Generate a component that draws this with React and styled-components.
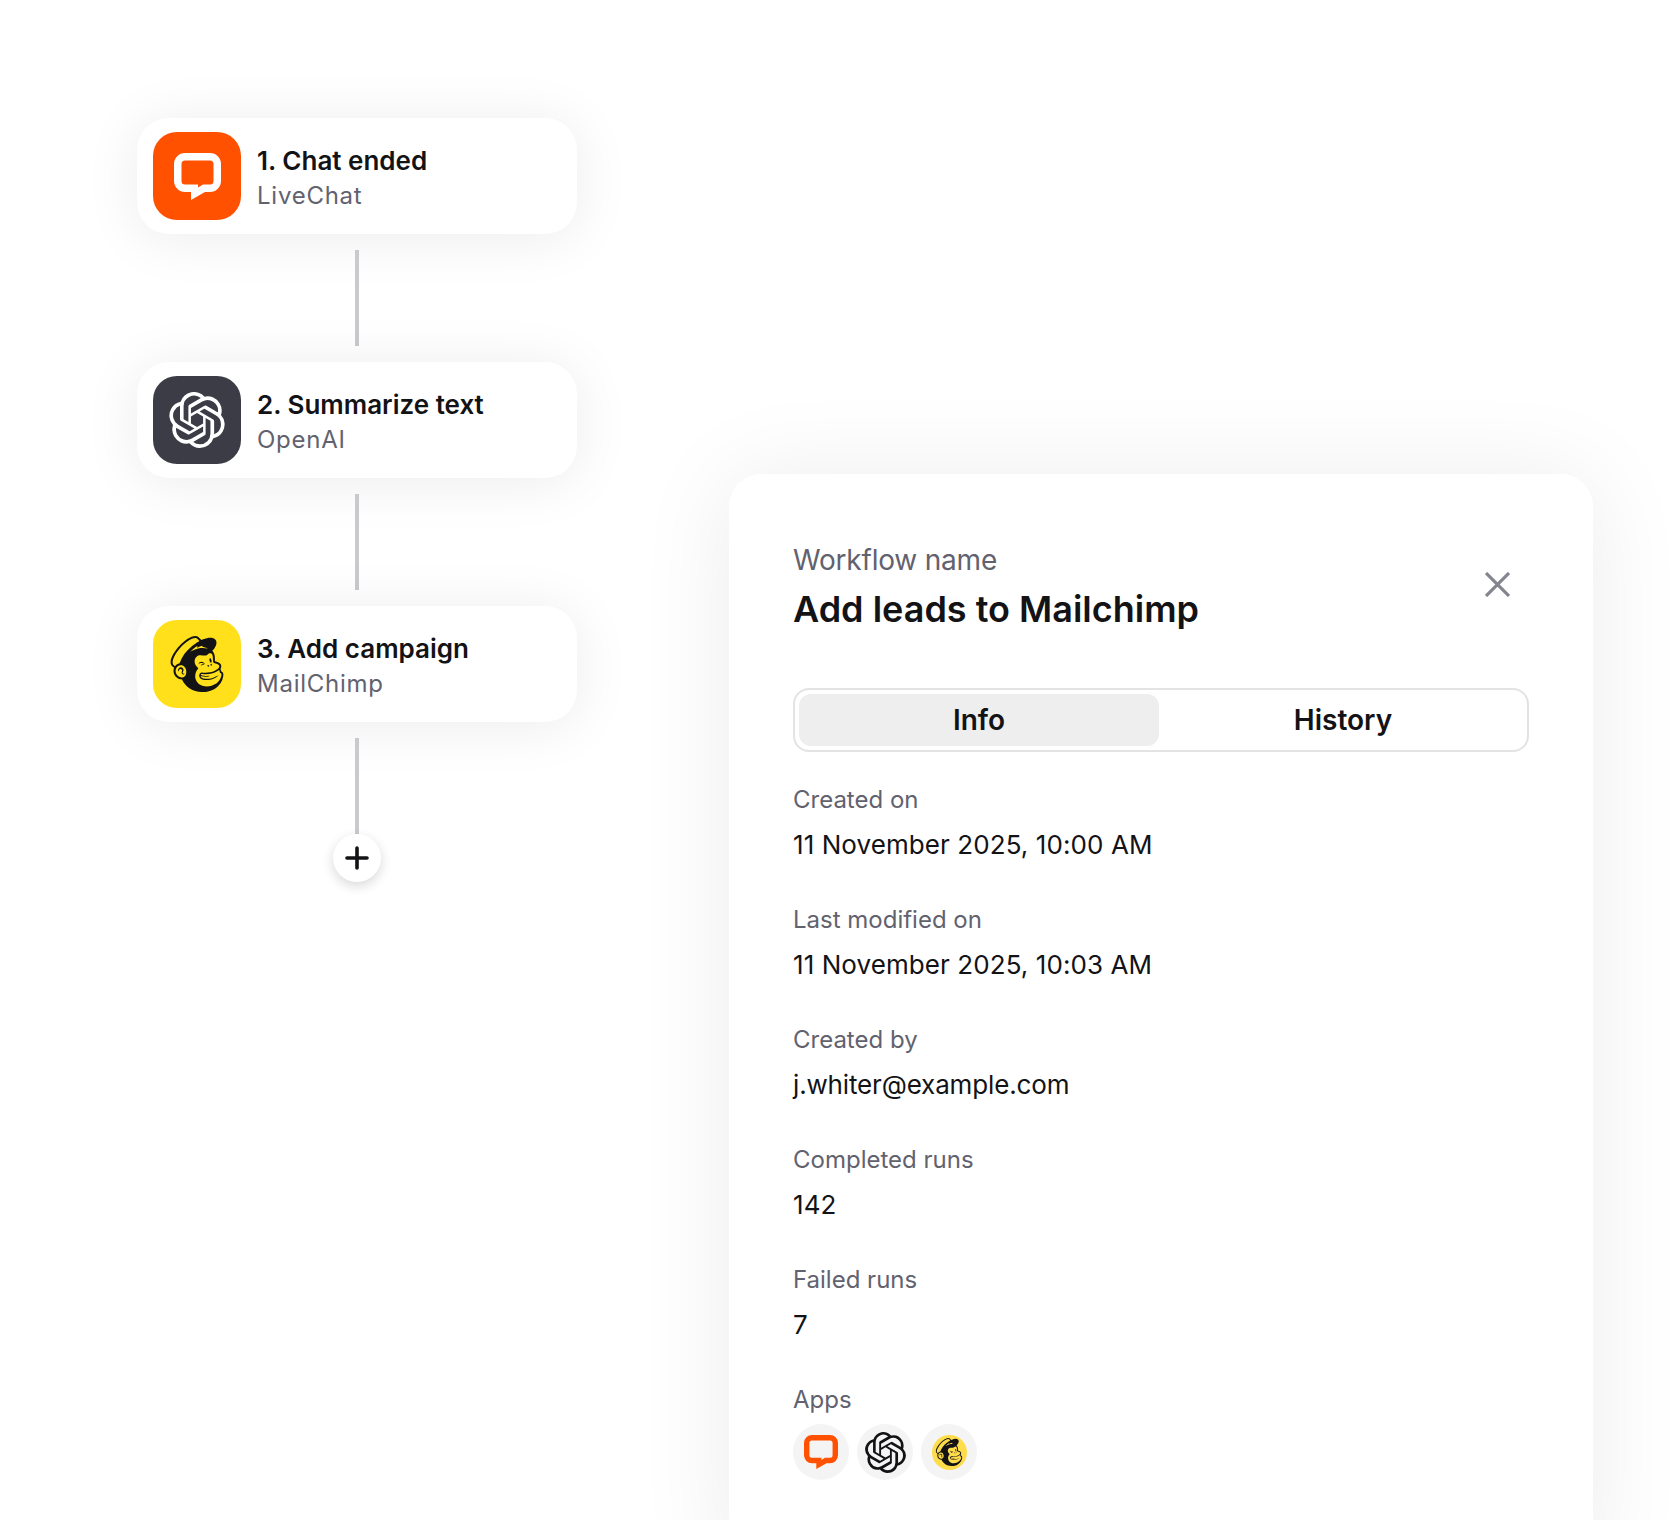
import styled, { createGlobalStyle } from 'styled-components'
import { SiOpenai, SiMailchimp } from 'react-icons/si'

const GlobalStyle = createGlobalStyle`
  html, body {
    margin: 0;
    padding: 0;
    background: #fff;
  }
  body {
    font-family: Inter, "Liberation Sans", sans-serif;
    color: #131316;
  }
`

const LiveChatIcon = ({ size, color }) => (
  <svg width={size} height={size} viewBox="0 0 47 47" fill={color}>
    <path
      fillRule="evenodd"
      d="M11 0H36a11 11 0 0 1 11 11V28a11 11 0 0 1-11 11H31L17 47V39H11A11 11 0 0 1 0 28V11A11 11 0 0 1 11 0ZM11 7.500a3.500 3.500 0 0 0-3.500 3.500V28a3.500 3.500 0 0 0 3.500 3.500H24V34.500L29 31.500H36a3.500 3.500 0 0 0 3.500-3.500V11a3.500 3.500 0 0 0-3.500-3.500Z"
    />
  </svg>
)

const steps = [
  { title: '1. Chat ended', app: 'LiveChat', bg: '#ff5100', icon: <LiveChatIcon size={47} color="#fff" /> },
  { title: '2. Summarize text', app: 'OpenAI', bg: '#3b3c45', icon: <SiOpenai size={56} color="#fff" /> },
  { title: '3. Add campaign', app: 'MailChimp', bg: '#ffe01b', icon: <SiMailchimp size={56} color="#131316" /> },
]

const fields = [
  { label: 'Created on', value: '11 November 2025, 10:00 AM' },
  { label: 'Last modified on', value: '11 November 2025, 10:03 AM' },
  { label: 'Created by', value: 'j.whiter@example.com', tight: true },
  { label: 'Completed runs', value: '142' },
  { label: 'Failed runs', value: '7' },
]

const App = () => (
  <Page>
    <GlobalStyle />
    <Flow>
      {steps.map(step => (
        <Step key={step.title}>
          <Card>
            <AppTile $bg={step.bg}>{step.icon}</AppTile>
            <StepText>
              <StepTitle>{step.title}</StepTitle>
              <StepApp>{step.app}</StepApp>
            </StepText>
          </Card>
          <Connector />
        </Step>
      ))}
      <AddButton>
        <svg width="24" height="24" viewBox="0 0 24 24" fill="none" stroke="#131316" strokeWidth="3.6" strokeLinecap="round">
          <path d="M12 2v20M2 12h20" />
        </svg>
      </AddButton>
    </Flow>
    <Panel>
      <Header>
        <div>
          <Eyebrow>Workflow name</Eyebrow>
          <Title>Add leads to Mailchimp</Title>
        </div>
        <Close>
          <svg width="25" height="25" viewBox="0 0 25 25" fill="none" stroke="#85858f" strokeWidth="3.2">
            <path d="M1 1l23 23M24 1L1 24" />
          </svg>
        </Close>
      </Header>
      <Tabs>
        <Tab $active>Info</Tab>
        <Tab>History</Tab>
      </Tabs>
      <Fields>
        {fields.map(field => (
          <Field key={field.label}>
            <Label>{field.label}</Label>
            <Value $tight={field.tight}>{field.value}</Value>
          </Field>
        ))}
        <div>
          <Label>Apps</Label>
          <AppList>
            <AppBadge><LiveChatIcon size={34} color="#ff5100" /></AppBadge>
            <AppBadge><SiOpenai size={41} color="#131316" /></AppBadge>
            <AppBadge>
              <ChimpDisc><SiMailchimp size={28} color="#131316" /></ChimpDisc>
            </AppBadge>
          </AppList>
        </div>
      </Fields>
    </Panel>
  </Page>
)

export default App

const Page = styled.div`
  display: flex;
  align-items: flex-start;
  gap: 152px;
  height: 1520px;
  padding: 118px 0 0 137px;
  box-sizing: border-box;
  overflow: hidden;
  background: #fff;
`

const Flow = styled.div`
  display: flex;
  flex-direction: column;
  align-items: center;
  width: 440px;
  flex-shrink: 0;
`

const Step = styled.div`
  display: flex;
  flex-direction: column;
  align-items: center;
  width: 100%;
`

const Card = styled.div`
  display: flex;
  align-items: center;
  gap: 16px;
  width: 100%;
  height: 116px;
  padding: 0 16px;
  box-sizing: border-box;
  background: #fff;
  border-radius: 32px;
  box-shadow: 0 4px 56px rgba(19, 19, 22, 0.08);
`

const AppTile = styled.div`
  display: flex;
  align-items: center;
  justify-content: center;
  width: 88px;
  height: 88px;
  border-radius: 24px;
  background: ${props => props.$bg};
`

const StepText = styled.div`
  padding-top: 5px;
`

const StepTitle = styled.div`
  font-size: 26px;
  line-height: 34px;
  font-weight: 600;
`

const StepApp = styled.div`
  font-size: 24px;
  line-height: 35px;
  letter-spacing: 0.75px;
  color: #62626f;
`

const Connector = styled.div`
  width: 4px;
  height: 96px;
  margin: 16px 0;
  background: #c9c9ce;
`

const AddButton = styled.div`
  display: flex;
  align-items: center;
  justify-content: center;
  position: relative;
  width: 48px;
  height: 48px;
  margin-top: -16px;
  border-radius: 50%;
  background: #fff;
  box-shadow: 0 4px 12px rgba(19, 19, 22, 0.16);
`

const Panel = styled.div`
  width: 864px;
  flex-shrink: 0;
  min-height: 1100px;
  margin-top: 356px;
  padding: 68px 64px;
  box-sizing: border-box;
  background: #fff;
  border-radius: 32px;
  box-shadow: 0 4px 96px rgba(19, 19, 22, 0.08);
`

const Header = styled.div`
  display: flex;
  align-items: center;
  justify-content: space-between;
  padding-right: 19px;
`

const Eyebrow = styled.div`
  font-size: 28px;
  line-height: 36px;
  letter-spacing: -0.2px;
  color: #62626f;
`

const Title = styled.div`
  font-size: 36px;
  line-height: 48px;
  font-weight: 600;
  margin-top: 7px;
`

const Close = styled.div`
  display: flex;
  margin-top: -6px;
`

const Tabs = styled.div`
  display: grid;
  grid-template-columns: 1fr 1fr;
  gap: 4px;
  height: 64px;
  margin-top: 55px;
  padding: 4px;
  box-sizing: border-box;
  border: 2px solid #e3e3e5;
  border-radius: 16px;
`

const Tab = styled.div`
  display: flex;
  align-items: center;
  justify-content: center;
  font-size: 28px;
  font-weight: 600;
  border-radius: 12px;
  background: ${props => (props.$active ? '#eeeeee' : 'transparent')};
`

const Fields = styled.div`
  display: flex;
  flex-direction: column;
  gap: 43px;
  margin-top: 32px;
`

const Field = styled.div`
  display: flex;
  flex-direction: column;
  gap: 13px;
`

const Label = styled.div`
  font-size: 24px;
  line-height: 32px;
  color: #62626f;
`

const Value = styled.div`
  font-size: 26px;
  line-height: 32px;
  letter-spacing: ${props => (props.$tight ? '-0.15px' : '0.08px')};
`

const AppList = styled.div`
  display: flex;
  gap: 8px;
  margin-top: 8px;
`

const AppBadge = styled.div`
  display: flex;
  align-items: center;
  justify-content: center;
  width: 56px;
  height: 56px;
  border-radius: 50%;
  background: #f4f4f5;
`

const ChimpDisc = styled.div`
  display: flex;
  align-items: center;
  justify-content: center;
  width: 35px;
  height: 35px;
  border-radius: 50%;
  background: #ffdc4a;
`
